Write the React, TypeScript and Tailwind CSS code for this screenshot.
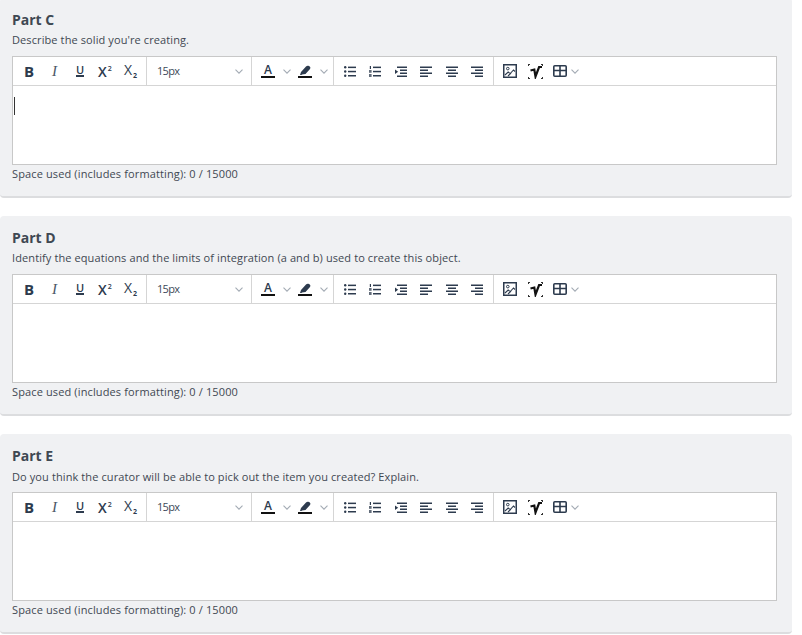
import React from "react";

const ink = "#2d3b4e";

function Chevron({ className = "" }: { className?: string }) {
  return (
    <svg width="8" height="5" viewBox="0 0 8 5" className={className} fill="none" stroke="#a3abb4" strokeWidth="1.1">
      <path d="M.5.7L4 4.200 7.500.7" />
    </svg>
  );
}

function Lines({ rows }: { rows: [number, number][] }) {
  return (
    <svg width="12" height="11" viewBox="0 0 12 11" fill={ink}>
      {rows.map(([x, w], i) => (
        <rect key={i} x={x} y={i * 3 + 0.5} width={w} height="1.500" />
      ))}
    </svg>
  );
}

function ListIcon({ numbered }: { numbered?: boolean }) {
  return (
    <svg width="12" height="11" viewBox="0 0 12 11" fill={ink}>
      {numbered ? (
        <>
          <rect x="0.800" y="0" width="1.200" height="3" />
          <rect x="0" y="4" width="2.600" height="2.800" opacity="0.75" />
          <rect x="0" y="8" width="2.600" height="3" opacity="0.75" />
        </>
      ) : (
        <>
          <circle cx="1.200" cy="1.300" r="1.200" />
          <circle cx="1.200" cy="5.500" r="1.200" />
          <circle cx="1.200" cy="9.700" r="1.200" />
        </>
      )}
      <rect x="4" y="0.600" width="8" height="1.500" />
      <rect x="4" y="4.800" width="8" height="1.500" />
      <rect x="4" y="9" width="8" height="1.500" />
    </svg>
  );
}

function Indent() {
  return (
    <svg width="12" height="11" viewBox="0 0 12 11" fill={ink}>
      <rect x="2" y="0.500" width="10" height="1.500" />
      <rect x="5" y="3.500" width="7" height="1.500" />
      <rect x="5" y="6.500" width="7" height="1.500" />
      <rect x="2" y="9.500" width="10" height="1.500" />
      <path d="M0 3.500l3.200 2.200L0 8z" />
    </svg>
  );
}

function ImageIcon() {
  return (
    <svg width="14" height="14" viewBox="0 0 14 14" fill="none" stroke={ink}>
      <rect x="0.750" y="0.750" width="12.500" height="12.500" strokeWidth="1.500" />
      <circle cx="4.800" cy="4.600" r="1.300" strokeWidth="1" />
      <path d="M2 11l3.200-3 2 1.600L10.500 6 12 7.500M5 12l3-3" strokeWidth="1.100" />
    </svg>
  );
}

function MathIcon() {
  return (
    <svg width="15" height="15" viewBox="0 0 15 15" fill="none">
      <path d="M0 .5h2M13 .5h2M.5 0v2M14.500 0v2M.5 13v2M14.500 13v2M0 14.500h2M13 14.500h2" stroke="#333" strokeWidth="1" />
      <path d="M2.500 6.500l3.800-1 1.200 7 3.600-9.500H14" stroke="#111" strokeWidth="2.200" />
    </svg>
  );
}

function TableIcon() {
  return (
    <svg width="14" height="12" viewBox="0 0 14 12" fill="none" stroke={ink} strokeWidth="1.600">
      <rect x="0.800" y="0.800" width="12.400" height="10.400" rx="1" />
      <path d="M1 5.500h12M7 1v10" />
    </svg>
  );
}

function TextColor() {
  return (
    <span className="flex w-[14px] flex-col items-center">
      <span className="text-[12px] leading-[11px] font-semibold text-[#2d3b4e]">A</span>
      <span className="mt-[1px] h-[2px] w-[14px] bg-[#111]" />
    </span>
  );
}

function Highlight() {
  return (
    <span className="flex w-[14px] flex-col items-center">
      <svg width="13" height="10" viewBox="0 0 13 10" fill={ink} className="mb-[1px]">
        <path d="M1 10l1-3 5-5.500c1-1 2-1 3-.5s2 1.500 1 3L6.500 9 3 9.500 2.500 10z" />
      </svg>
      <span className="h-[2px] w-[14px] bg-[#111]" />
    </span>
  );
}

function Toolbar() {
  return (
    <div className="flex h-[29px] items-stretch border-b border-[#d5d5d5] text-[#2d3b4e]">
      <div className="flex w-[134px] items-center border-r border-[#d5d5d5] pl-[11px]">
        <span className="w-[28px] text-[15px] leading-none font-bold">B</span>
        <span className="w-[24px] font-['Liberation_Serif',serif] text-[15px] leading-none text-[#4a5666] italic">I</span>
        <span className="flex w-[22px] flex-col">
          <span className="w-[8px] text-center text-[11px] leading-[10px] font-semibold">U</span>
          <span className="h-[1.500px] w-[8px] bg-[#2d3b4e]" />
        </span>
        <span className="w-[26px] pt-[2px] text-[14px] leading-none font-semibold">
          X<span className="relative top-[-6px] ml-[1px] text-[7px]">2</span>
        </span>
        <span className="pb-[3px] text-[14px] leading-none font-medium">
          X<span className="relative top-[3px] ml-[1px] text-[7px] font-bold">2</span>
        </span>
      </div>
      <div className="flex w-[105px] items-center justify-between border-r border-[#d5d5d5] pr-[7px] pl-[10px] text-[11px] tracking-[-0.7px] text-[#3c4858]">
        <span>15px</span>
        <Chevron className="mr-[1px]" />
      </div>
      <div className="flex w-[82px] items-center border-r border-[#d5d5d5] pl-[9px]">
        <TextColor />
        <Chevron className="mr-[7px] ml-[8px]" />
        <Highlight />
        <Chevron className="ml-[8px]" />
      </div>
      <div className="flex w-[160px] items-center gap-[13.500px] border-r border-[#d5d5d5] pl-[9.500px]">
        <ListIcon />
        <ListIcon numbered />
        <Indent />
        <Lines rows={[[0, 12], [0, 8], [0, 12], [0, 8]]} />
        <Lines rows={[[0, 12], [2, 8], [0, 12], [2, 8]]} />
        <Lines rows={[[0, 12], [4, 8], [0, 12], [4, 8]]} />
      </div>
      <div className="flex items-center pl-[9px]">
        <ImageIcon />
        <span className="ml-[11px]"><MathIcon /></span>
        <span className="ml-[10px]"><TableIcon /></span>
        <Chevron className="ml-[4px]" />
      </div>
    </div>
  );
}

function Part({ title, prompt, caret, lowPrompt }: { title: string; prompt: string; caret?: boolean; lowPrompt?: boolean }) {
  return (
    <section className="h-[200px] rounded-[4px] border-b-2 border-[#dcdddf] bg-[#f0f1f3] px-[12px] pt-[12px]">
      <h2 className="text-[14px] leading-[20px] font-bold text-[#3f4852]">{title}</h2>
      <p className={`${lowPrompt ? "mt-[2px]" : "mt-[1px]"} text-[11px] leading-[17px] tracking-[0.1px] text-[#3f4852]`}>{prompt}</p>
      <div className={`${lowPrompt ? "mt-[7px]" : "mt-[8px]"} mr-[3px] h-[109px] border border-[#c8c8c8] bg-white`}>
        <Toolbar />
        {caret && <div className="mt-[11px] ml-[1px] h-[18px] w-px bg-[#333]" />}
      </div>
      <p className="mt-[1px] text-[11px] leading-[16px] tracking-[0.13px] text-[#3f4852]">Space used (includes formatting): 0 / 15000</p>
    </section>
  );
}

export default function App() {
  return (
    <div className="h-[635px] w-[802px] overflow-hidden bg-white font-['Open_Sans',sans-serif]">
      <div className="mt-[-2px] flex w-[792px] flex-col gap-[18px]">
        <Part title="Part C" prompt="Describe the solid you're creating." caret />
        <Part title="Part D" prompt="Identify the equations and the limits of integration (a and b) used to create this object." />
        <Part title="Part E" prompt="Do you think the curator will be able to pick out the item you created? Explain." lowPrompt />
      </div>
    </div>
  );
}
